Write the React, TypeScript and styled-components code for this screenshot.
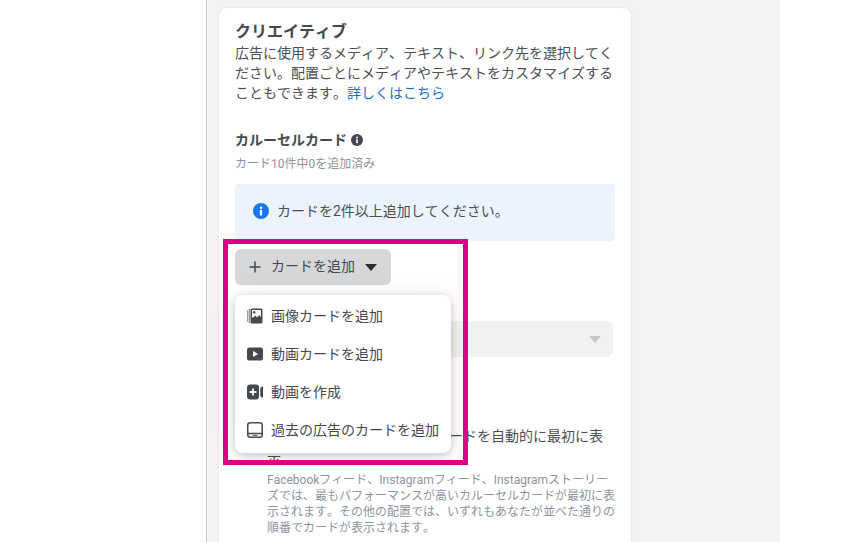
import React from "react";
import styled, { createGlobalStyle } from "styled-components";

const Global = createGlobalStyle`
  html, body { margin: 0; padding: 0; background: #fff; }
  body {
    width: 850px;
    height: 542px;
    overflow: hidden;
    font-family: Roboto, "Noto Sans CJK JP", sans-serif;
    font-kerning: none;
    text-spacing-trim: space-all;
    color: #444950;
  }
`;

const Page = styled.div`
  display: flex;
  width: 850px;
  height: 542px;
  overflow: hidden;
`;

const Blank = styled.div<{ $w: number }>`
  width: ${(p) => p.$w}px;
  flex: none;
  background: #fff;
`;

const Canvas = styled.main`
  width: 574px;
  flex: none;
  box-sizing: border-box;
  background: #f2f4f4;
  border-left: 1px solid #c9cccf;
  padding: 8px 0 0 12px;
`;

const Card = styled.section`
  width: 412px;
  height: 600px;
  box-sizing: border-box;
  padding: 14px 16px;
  background: #fff;
  border-radius: 8px;
  box-shadow: 0 0 2px rgba(0, 0, 0, 0.12);
`;

const Title = styled.h2`
  margin: 0;
  font-size: 16px;
  line-height: 20px;
  font-weight: 700;
  color: #444950;
`;

const Body = styled.p`
  margin: 1px 0 0;
  font-size: 14px;
  line-height: 20px;
  color: #4b4f56;
`;

const Link = styled.a`
  color: #1a6ed8;
`;

const SectionTitle = styled.h3`
  display: flex;
  align-items: center;
  gap: 4px;
  margin: 27px 0 0;
  font-size: 14px;
  line-height: 20px;
  font-weight: 700;
  color: #444950;
`;

const Hint = styled.div`
  margin-top: 5px;
  font-size: 12px;
  line-height: 18px;
  color: #8d949e;
`;

const Notice = styled.div`
  display: flex;
  align-items: center;
  gap: 8px;
  height: 57px;
  box-sizing: border-box;
  margin-top: 11px;
  padding: 0 0 3px 18px;
  background: #ebf3fd;
  border-radius: 4px;
  font-size: 14px;
  color: #4b4f56;
`;

const NoticeText = styled.span`
  padding-bottom: 3px;
`;

const AddArea = styled.div`
  position: relative;
  margin-top: 8px;
`;

const Highlight = styled.div`
  position: absolute;
  left: -12px;
  top: -10px;
  width: 245px;
  height: 226px;
  box-sizing: border-box;
  border: 5px solid #dc0082;
  z-index: 3;
  pointer-events: none;
`;

const AddButton = styled.button`
  display: flex;
  align-items: center;
  width: 156px;
  height: 36px;
  box-sizing: border-box;
  padding: 0 0 0 14px;
  border: 0;
  border-radius: 6px;
  background: #d6d7d8;
  font: inherit;
  font-size: 14px;
  color: #444950;
`;

const ButtonLabel = styled.span`
  margin: 0 10px 0 10px;
  padding-bottom: 4px;
`;

const Menu = styled.ul`
  position: absolute;
  left: 0;
  top: 46px;
  width: 216px;
  height: 158px;
  box-sizing: border-box;
  margin: 0;
  padding: 2px 0;
  list-style: none;
  background: #fff;
  border-radius: 8px;
  box-shadow: 0 2px 8px rgba(0, 0, 0, 0.2), 0 0 24px rgba(0, 0, 0, 0.08);
  z-index: 2;
`;

const MenuItem = styled.li`
  display: flex;
  align-items: center;
  gap: 8px;
  height: 38px;
  padding-left: 12px;
  font-size: 14px;
  color: #444950;
  white-space: nowrap;
`;

const MenuLabel = styled.span`
  padding-bottom: 2px;
`;

const IconSlot = styled.span`
  display: flex;
  align-items: center;
  width: 16px;
  flex: none;
`;

const FieldSelect = styled.div`
  display: flex;
  align-items: center;
  justify-content: flex-end;
  width: 378px;
  height: 36px;
  box-sizing: border-box;
  margin-top: 36px;
  padding-right: 12px;
  background: #f0f1f2;
  border-radius: 6px;
`;

const Option = styled.div`
  margin: 68px 0 0 32px;
`;

const OptionLabel = styled.div`
  font-size: 14px;
  line-height: 22px;
  color: #4b4f56;
`;

const OptionHint = styled.div`
  margin-top: 3px;
  font-size: 12px;
  line-height: 16px;
  color: #8d949e;
`;

const Caret = ({ color }: { color: string }) => (
  <svg width="12" height="7" viewBox="0 0 12 7">
    <path d="M0 0h12L6.5 6.4a0.7 0.7 0 0 1-1 0z" fill={color} />
  </svg>
);

const InfoIcon = ({ size, bg }: { size: number; bg: string }) => (
  <svg width={size} height={size} viewBox="0 0 16 16">
    <circle cx="8" cy="8" r="8" fill={bg} />
    <rect x="6.9" y="7" width="2.2" height="5.4" rx="0.4" fill="#fff" />
    <circle cx="8" cy="4.7" r="1.3" fill="#fff" />
  </svg>
);

const PlusIcon = () => (
  <svg width="12" height="12" viewBox="0 0 12 12">
    <path d="M6 0.5v11M0.5 6h11" stroke="#444950" strokeWidth="1.5" />
  </svg>
);

const ImageIcon = () => (
  <svg width="16" height="16" viewBox="0 0 16 16">
    <path d="M0.5 2v12" stroke="#9a9da1" strokeWidth="1" />
    <path d="M2.2 1v14" stroke="#6b6e73" strokeWidth="1" />
    <rect x="3.5" y="0.5" width="12" height="15" rx="1.6" fill="#444950" />
    <rect x="5" y="2" width="9" height="7.5" fill="#fff" />
    <circle cx="7.2" cy="4.2" r="1.2" fill="#444950" />
    <path d="M4.5 12l3.5-4.4 2.2 2 2-2.6 2.3 2.8v3.7H4.5z" fill="#444950" />
  </svg>
);

const PlayIcon = () => (
  <svg width="16" height="14" viewBox="0 0 16 14">
    <rect x="0" y="0.5" width="16" height="13" rx="2.6" fill="#444950" />
    <path d="M6 4v6l5-3z" fill="#fff" />
  </svg>
);

const CreateVideoIcon = () => (
  <svg width="16" height="16" viewBox="0 0 16 16">
    <rect x="0" y="0.5" width="12" height="15" rx="3" fill="#444950" />
    <path d="M6 4.5v7M2.6 8h6.8" stroke="#fff" strokeWidth="1.8" />
    <path d="M16 2.2v11.6c-1.6-0.4-2.8-1.4-2.8-2.6V4.8c0-1.2 1.2-2.2 2.8-2.6z" fill="#444950" />
  </svg>
);

const TabletIcon = () => (
  <svg width="16" height="16" viewBox="0 0 16 16">
    <rect x="0.75" y="0.75" width="14.5" height="14.5" rx="2.4" fill="none" stroke="#444950" strokeWidth="1.5" />
    <path d="M1 11.5h14" stroke="#444950" strokeWidth="1.5" />
    <path d="M5.5 13.4h5" stroke="#444950" strokeWidth="1" />
  </svg>
);

const menuItems = [
  { icon: <ImageIcon />, label: "画像カードを追加" },
  { icon: <PlayIcon />, label: "動画カードを追加" },
  { icon: <CreateVideoIcon />, label: "動画を作成" },
  { icon: <TabletIcon />, label: "過去の広告のカードを追加" },
];

export default function App() {
  return (
    <Page>
      <Global />
      <Blank $w={206} />
      <Canvas>
        <Card>
          <Title>クリエイティブ</Title>
          <Body>
            広告に使用するメディア、テキスト、リンク先を選択してください。配置ごとにメディアやテキストをカスタマイズすることもできます。
            <Link>詳しくはこちら</Link>
          </Body>
          <SectionTitle>
            カルーセルカード
            <InfoIcon size={12} bg="#444950" />
          </SectionTitle>
          <Hint>カード10件中0を追加済み</Hint>
          <Notice>
            <InfoIcon size={16} bg="#1877f2" />
            <NoticeText>カードを2件以上追加してください。</NoticeText>
          </Notice>
          <AddArea>
            <Highlight />
            <AddButton>
              <PlusIcon />
              <ButtonLabel>カードを追加</ButtonLabel>
              <Caret color="#2b2d30" />
            </AddButton>
            <Menu>
              {menuItems.map((item) => (
                <MenuItem key={item.label}>
                  <IconSlot>{item.icon}</IconSlot>
                  <MenuLabel>{item.label}</MenuLabel>
                </MenuItem>
              ))}
            </Menu>
            <FieldSelect>
              <Caret color="#c4c7cc" />
            </FieldSelect>
            <Option>
              <OptionLabel>最もパフォーマンスが高いカードを自動的に最初に表示</OptionLabel>
              <OptionHint>
                Facebookフィード、Instagramフィード、Instagramストーリーズでは、最もパフォーマンスが高いカルーセルカードが最初に表示されます。その他の配置では、いずれもあなたが並べた通りの順番でカードが表示されます。
              </OptionHint>
            </Option>
          </AddArea>
        </Card>
      </Canvas>
      <Blank $w={70} />
    </Page>
  );
}
